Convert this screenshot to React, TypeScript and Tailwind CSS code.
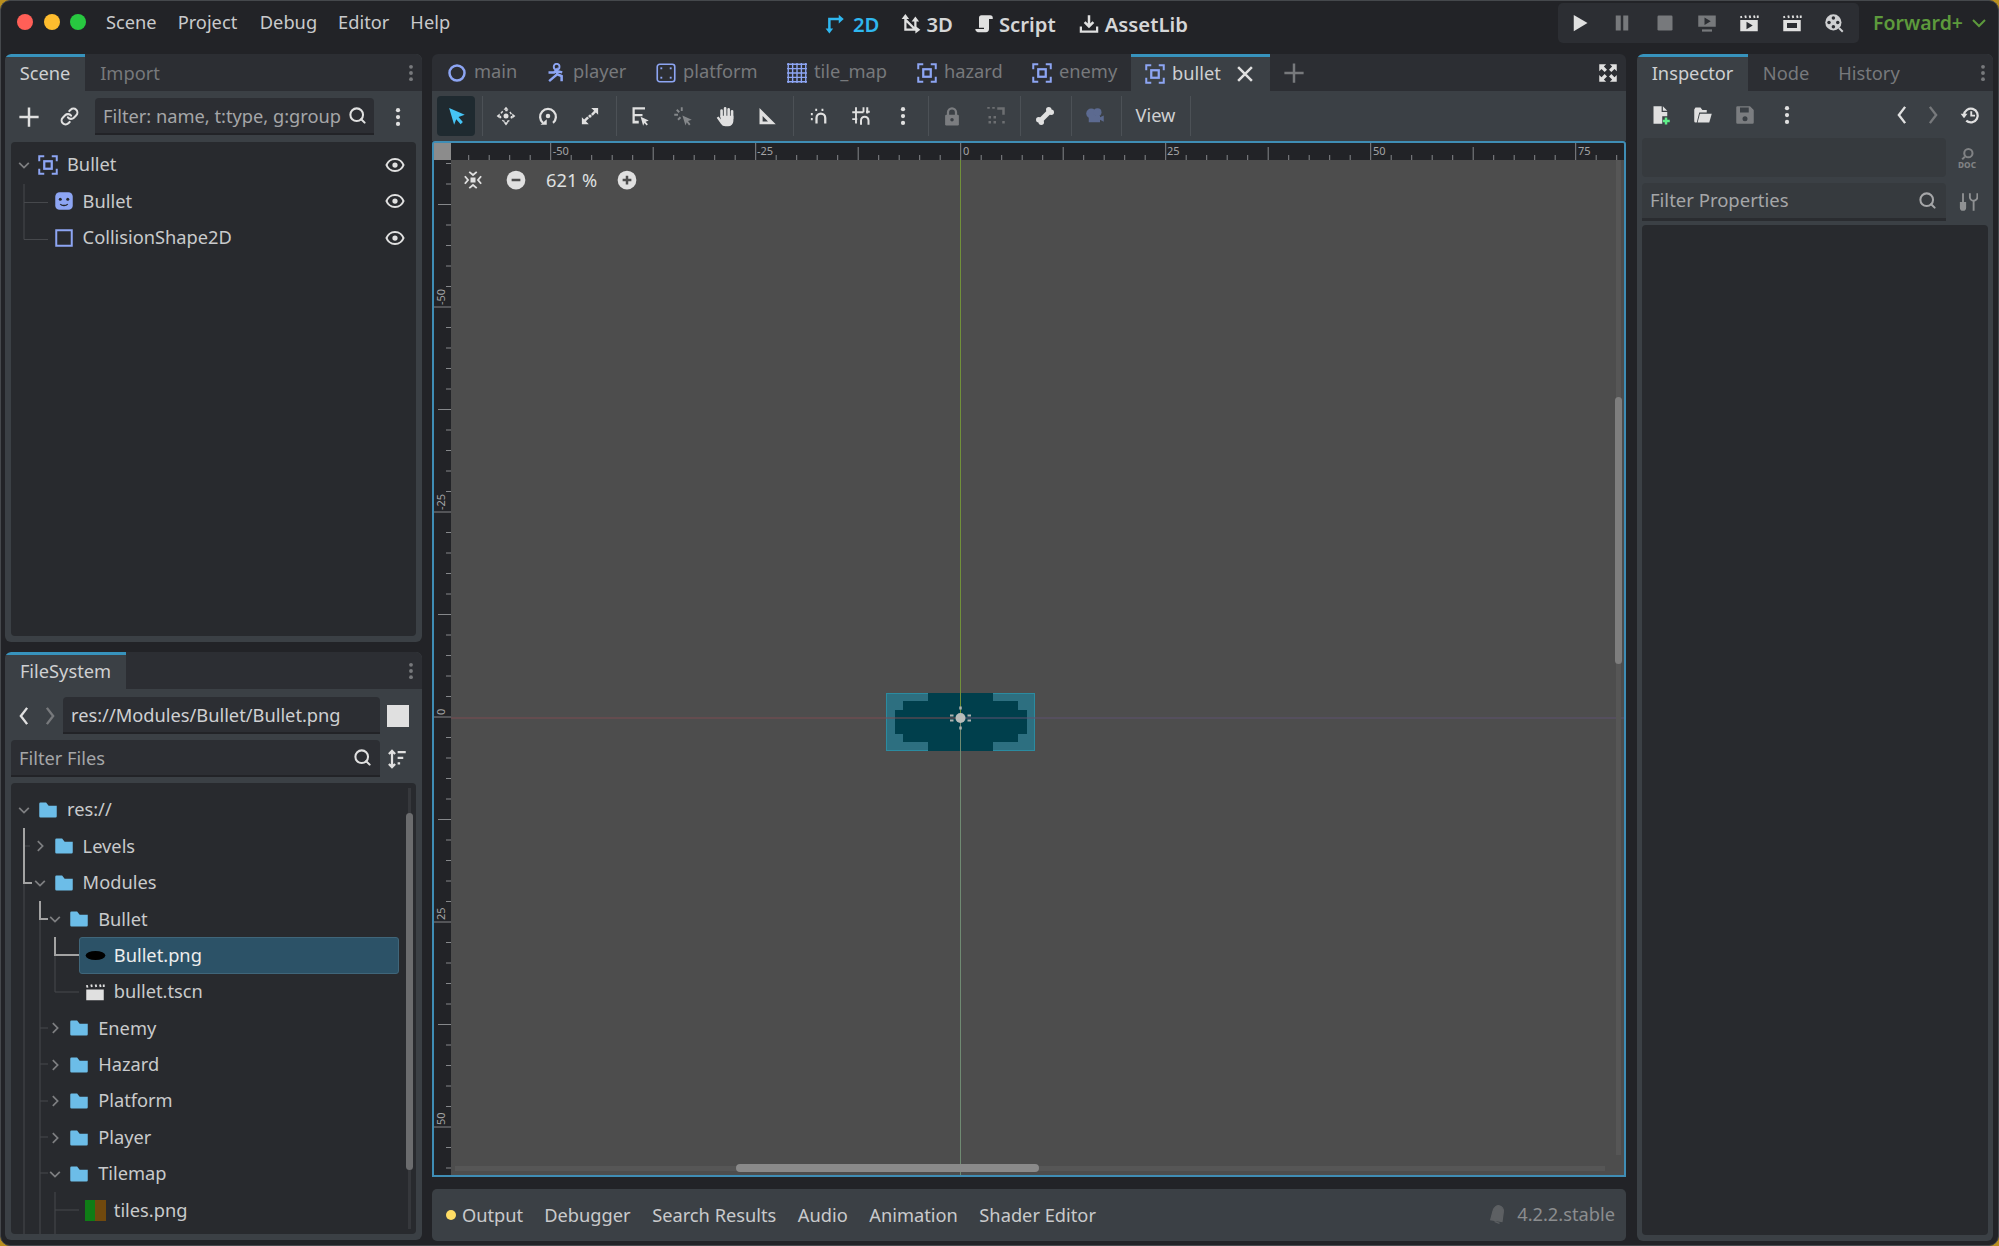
import React from 'react';
import { Link, Search } from 'lucide-react';

const BLUE = '#8da5f3';

const Ic: React.FC<{ s?: number; c?: string; o?: number; children: React.ReactNode }> = ({ s = 20, c = '#e0e0e0', o = 1, children }) => (
  <svg width={s} height={s} viewBox="0 0 16 16" fill="none" color={c} opacity={o} className="shrink-0">
    {children}
  </svg>
);

const Node2D = () => (
  <Ic c={BLUE}>
    <path d="M1 5V1h4M11 1h4v4M15 11v4h-4M5 15H1v-4" stroke="currentColor" strokeWidth="1.6" />
    <rect x="5" y="5" width="6" height="6" stroke="currentColor" strokeWidth="1.8" />
  </Ic>
);
const SpriteIcon = () => (
  <Ic c={BLUE}>
    <rect x="1" y="1" width="14" height="14" rx="3.5" fill="currentColor" />
    <circle cx="5" cy="6.5" r="1.2" fill="#26282c" />
    <circle cx="11" cy="6.5" r="1.2" fill="#26282c" />
    <path d="M5 10.5c1.5 1.5 4.5 1.5 6 0" stroke="#26282c" strokeWidth="1.1" />
  </Ic>
);
const ShapeIcon = () => (
  <Ic c={BLUE}>
    <rect x="1.8" y="1.8" width="12.4" height="12.4" stroke="currentColor" strokeWidth="1.6" />
  </Ic>
);
const CircleIcon = () => (
  <Ic c={BLUE}>
    <circle cx="8" cy="8" r="6" stroke="currentColor" strokeWidth="2" />
  </Ic>
);
const PlayerIcon = () => (
  <Ic c={BLUE}>
    <circle cx="8.5" cy="3" r="2.3" stroke="currentColor" strokeWidth="1.5" />
    <path d="M2 7.5h4.500l2-2 .5 3.500-3 2.500-3.500 3M9 9l3.500 1.500V14.500M9 6.500l4 1" stroke="currentColor" strokeWidth="2" />
  </Ic>
);
const PlatformIcon = () => (
  <Ic c={BLUE}>
    <rect x="1" y="1" width="14" height="14" rx="2" stroke="currentColor" strokeWidth="1.3" />
    <rect x="3.5" y="3.5" width="1.5" height="1.5" fill="currentColor" />
    <rect x="11" y="3.5" width="1.5" height="1.5" fill="currentColor" />
    <rect x="3.5" y="11" width="1.5" height="1.5" fill="currentColor" />
    <rect x="11" y="11" width="1.5" height="1.5" fill="currentColor" />
  </Ic>
);
const TileIcon = () => (
  <Ic c={BLUE}>
    <path d="M1 0v16M4.500 0v16M8 0v16M11.500 0v16M15 0v16M0 1h16M0 4.500h16M0 8h16M0 11.500h16M0 15h16" stroke="currentColor" strokeWidth="1.1" />
  </Ic>
);
const Dots: React.FC<{ c?: string; s?: number }> = ({ c = '#e0e0e0', s = 20 }) => (
  <Ic c={c} s={s}>
    <circle cx="8" cy="2.5" r="1.7" fill="currentColor" />
    <circle cx="8" cy="8" r="1.7" fill="currentColor" />
    <circle cx="8" cy="13.5" r="1.7" fill="currentColor" />
  </Ic>
);
const Eye = () => (
  <Ic>
    <path d="M8 3.200C4.500 3.200 2 5.800 1.200 8 2 10.200 4.500 12.800 8 12.800s6-2.600 6.800-4.800C14 5.800 11.500 3.200 8 3.200z" stroke="currentColor" strokeWidth="1.7" />
    <circle cx="8" cy="8" r="2.1" fill="currentColor" />
  </Ic>
);
const Arrow: React.FC<{ open?: boolean }> = ({ open }) => (
  <Ic s={14} c="#7d7e80">
    <path d={open ? 'M2.500 5.500 8 11l5.500-5.500' : 'M5.500 2.500 11 8l-5.500 5.500'} stroke="currentColor" strokeWidth="2" />
  </Ic>
);
const Folder = () => (
  <Ic c="#6cbde8">
    <path d="M1 3a1 1 0 0 1 1-1h4.500l2 2.500H15V13a1 1 0 0 1-1 1H2a1 1 0 0 1-1-1z" fill="currentColor" />
  </Ic>
);
const Clapper = () => (
  <Ic>
    <path d="M1 6h14v8.500H1z" fill="currentColor" />
    <path d="M1.500 2.500 2 4.500M5 2l.5 2M8.500 2l.5 2M12 2l.5 2M15 2v2" stroke="currentColor" strokeWidth="1.5" />
  </Ic>
);
const Chev: React.FC<{ right?: boolean; c?: string }> = ({ right, c = '#e0e0e0' }) => (
  <Ic c={c}>
    <path d={right ? 'M5.500 1.500 10.500 8l-5 6.500' : 'M10.500 1.500 5.500 8l5 6.500'} stroke="currentColor" strokeWidth="1.9" />
  </Ic>
);
const Close = () => (
  <Ic>
    <path d="M2.500 2.500l11 11M13.500 2.500l-11 11" stroke="currentColor" strokeWidth="2" />
  </Ic>
);
const PlusIcon: React.FC<{ c?: string; s?: number }> = ({ c = '#e0e0e0', s = 22 }) => (
  <Ic c={c} s={s}>
    <path d="M8 1v14M1 8h14" stroke="currentColor" strokeWidth="1.8" />
  </Ic>
);
const Sep = () => <div className="w-px h-[40px] bg-[#4c5156] shrink-0" />;

const TabBtn: React.FC<{ label: string; active?: boolean; w: string }> = ({ label, active, w }) => (
  <div className={`flex items-center h-[37px] pb-[2px] shrink-0 ${w} ${active ? 'bg-[#3b4045] border-t-[3px] border-[#3793bd] text-[#cfd0d2]' : 'border-t-[3px] border-transparent text-[#77797c]'}`}>
    <span>{label}</span>
  </div>
);

const DockTabs: React.FC<{ children: React.ReactNode }> = ({ children }) => (
  <div className="flex items-center h-[37px] bg-[#2c2e33] rounded-t-[6px] shrink-0 relative overflow-hidden">{children}</div>
);

const Field: React.FC<{ className?: string; text?: string; dim?: boolean; children?: React.ReactNode }> = ({ className, text, dim, children }) => (
  <div className={`flex items-center justify-between h-[37px] bg-[#2c2e33] border-b-[2px] border-[#222327] rounded-t-[4px] px-[8px] ${className ?? ''} ${dim ? 'text-[#a5a6a8]' : 'text-[#cfd0d2]'}`}>
    <span className="whitespace-nowrap leading-[24px]">{text}</span>
    {children}
  </div>
);

type Row = { d: number; name: string; kind: 'folder' | 'png' | 'scene' | 'tiles'; open?: boolean; leaf?: boolean; sel?: boolean };
const files: Row[] = [
  { d: 0, name: 'res://', kind: 'folder', open: true },
  { d: 1, name: 'Levels', kind: 'folder' },
  { d: 1, name: 'Modules', kind: 'folder', open: true },
  { d: 2, name: 'Bullet', kind: 'folder', open: true },
  { d: 3, name: 'Bullet.png', kind: 'png', leaf: true, sel: true },
  { d: 3, name: 'bullet.tscn', kind: 'scene', leaf: true },
  { d: 2, name: 'Enemy', kind: 'folder' },
  { d: 2, name: 'Hazard', kind: 'folder' },
  { d: 2, name: 'Platform', kind: 'folder' },
  { d: 2, name: 'Player', kind: 'folder' },
  { d: 2, name: 'Tilemap', kind: 'folder', open: true },
  { d: 3, name: 'tiles.png', kind: 'tiles', leaf: true },
];

const FileIcon: React.FC<{ kind: Row['kind'] }> = ({ kind }) => {
  if (kind === 'folder') return <Folder />;
  if (kind === 'scene') return <Clapper />;
  if (kind === 'png')
    return (
      <Ic s={21}>
        <ellipse cx="8" cy="8" rx="7.5" ry="3.4" fill="#000" />
      </Ic>
    );
  return (
    <div className="flex w-[21px] h-[21px] shrink-0">
      <div className="w-1/2 bg-[#0f7d16]" />
      <div className="w-1/2 bg-[#70490e]" />
    </div>
  );
};

const FileRow: React.FC<{ r: Row }> = ({ r }) => (
  <div className="relative flex items-center h-[36.4px] text-[#c9cacc]" style={{ paddingLeft: 5 + r.d * 15.6 }}>
    {r.sel && <div className="absolute left-[68px] right-[17px] inset-y-0 bg-[#2c5267] border border-[#40667a] rounded-[3px]" />}
    <div className="relative flex items-center w-[16px] justify-center shrink-0">{!r.leaf && <Arrow open={r.open} />}</div>
    <div className={`relative flex items-center ml-[6px] ${r.kind === 'png' || r.kind === 'tiles' ? 'gap-[8px]' : 'gap-[9px]'}`}>
      <FileIcon kind={r.kind} />
      <span className={`pb-[1px] ${r.sel ? 'text-[#eceded]' : ''}`}>{r.name}</span>
    </div>
  </div>
);

const SceneRow: React.FC<{ d: number; icon: React.ReactNode; name: string; arrow?: boolean }> = ({ d, icon, name, arrow }) => (
  <div className="flex items-center h-[36.4px] text-[#c9cacc] pr-[11px]" style={{ paddingLeft: 5 + d * 15.6 }}>
    <div className="flex items-center w-[16px] justify-center shrink-0">{arrow && <Arrow open />}</div>
    <div className="flex items-center ml-[6px] gap-[9px]">
      {icon}
      <span className="pb-[1px]">{name}</span>
    </div>
    <div className="ml-auto">
      <Eye />
    </div>
  </div>
);

const ScenePanel = () => (
  <div className="flex flex-col h-[588px] bg-[#3b4045] rounded-[6px] overflow-hidden">
    <DockTabs>
      <TabBtn label="Scene" active w="w-[80px] justify-center" />
      <TabBtn label="Import" w="w-[90px] justify-center" />
      <div className="ml-auto mr-[2px]">
        <Dots c="#77797c" s={18} />
      </div>
    </DockTabs>
    <div className="flex items-center h-[51px] shrink-0 pl-[13px] pr-[14px]">
      <PlusIcon />
      <div className="ml-[20px]">
        <Link size={19} strokeWidth={2.6} color="#e0e0e0" />
      </div>
      <Field className="ml-[16px] w-[279px] pr-[7px]" text="Filter: name, t:type, g:group" dim>
        <Search size={19} strokeWidth={2.6} color="#e0e0e0" className="shrink-0" />
      </Field>
      <div className="ml-auto">
        <Dots />
      </div>
    </div>
    <div className="flex-1 mx-[6px] mb-[6px] bg-[#282a2e] rounded-[4px] pt-[4.8px] relative">
      <SceneRow d={0} arrow icon={<Node2D />} name="Bullet" />
      <SceneRow d={1} icon={<SpriteIcon />} name="Bullet" />
      <SceneRow d={1} icon={<ShapeIcon />} name="CollisionShape2D" />
      <svg className="absolute left-0 top-0" width="60" height="110" fill="none">
        <path d="M13 42v55.500M13 60.500h24M13 97.500h24" stroke="#46484c" />
      </svg>
    </div>
  </div>
);

const FilePanel = () => (
  <div className="flex flex-col h-[588px] mt-[10px] bg-[#3b4045] rounded-[6px] overflow-hidden">
    <DockTabs>
      <TabBtn label="FileSystem" active w="w-[121px] justify-center" />
      <div className="ml-auto mr-[2px]">
        <Dots c="#77797c" s={18} />
      </div>
    </DockTabs>
    <div className="flex items-center h-[45px] shrink-0 pt-[8px] pl-[9px]">
      <Chev />
      <div className="ml-[6px]">
        <Chev right c="#77797c" />
      </div>
      <Field className="ml-[3px] w-[317px]" text="res://Modules/Bullet/Bullet.png" />
      <div className="w-[22px] h-[22px] bg-[#e0e0e0] ml-[7px]" />
    </div>
    <div className="flex items-center h-[43px] shrink-0 pt-[6px] pl-[6px]">
      <Field className="w-[369px]" text="Filter Files" dim>
        <Search size={19} strokeWidth={2.6} color="#e0e0e0" className="shrink-0" />
      </Field>
      <div className="ml-[7px]">
        <Ic>
          <path d="M4 1.500v13M1.500 4 4 1.500 6.500 4M1.500 12 4 14.500 6.500 12" stroke="currentColor" strokeWidth="1.8" />
          <path d="M8.500 2.500H15M8.500 7H13M8.500 11.500h2" stroke="currentColor" strokeWidth="1.8" />
        </Ic>
      </div>
    </div>
    <div className="flex-1 relative mx-[6px] mt-[6px] mb-[6px] bg-[#282a2e] rounded-[4px] pt-[8.8px] overflow-hidden">
      {files.map((r) => (
        <FileRow key={r.name + r.d} r={r} />
      ))}
      <svg className="absolute left-0 top-0" width="80" height="452" fill="none">
        <path d="M13 100v352M29 136v316M44 409v43M29 245h8M29 281h8M29 318h8M29 354h8M29 390h8M44 172v37h24M44 427h24M13 63h6" stroke="#46484c" />
        <path d="M13 45v55h8M29 118v18h8M44 154v18h24" stroke="#a3a3a3" strokeWidth="2" />
      </svg>
      <div className="absolute right-[5px] top-[5px] bottom-[5px] w-[3px] bg-[#36383c]" />
      <div className="absolute right-[3px] top-[30px] h-[357px] w-[7px] rounded-full bg-[#6b6c6e]" />
    </div>
  </div>
);

// canvas starts at page x 451 / y 160; origin of the 2D view sits at 961, 717
const TopRuler = () => {
  const ticks = Array.from({ length: 58 }, (_, i) => 550.7 + (i - 4) * 20.5 - 451);
  return (
    <svg width="1173" height="17" fill="none" className="block">
      {ticks.map((x, i) => {
        const k = i - 4;
        const h = ((k % 10) + 10) % 10 === 0 ? 17 : ((k % 5) + 5) % 5 === 0 ? 13 : 5;
        return <line key={i} x1={x} x2={x} y1={17 - h} y2={17} stroke="#85878a" />;
      })}
      {[
        ['-50', 99.7],
        ['-25', 304],
        ['0', 510],
        ['25', 714],
        ['50', 920],
        ['75', 1125],
      ].map(([t, x]) => (
        <text key={t} x={Number(x) + 2} y="12" fontSize="11" fill="#a3a4a6" fontFamily="'Noto Sans', sans-serif">
          {t}
        </text>
      ))}
    </svg>
  );
};

const LeftRuler = () => {
  const ticks = Array.from({ length: 50 }, (_, i) => (i - 7) * 20.5 + 307 - 160);
  return (
    <svg width="17" height="1015" fill="none" className="block shrink-0">
      {ticks.map((y, i) => {
        const k = i - 7;
        const h = ((k % 10) + 10) % 10 === 0 ? 17 : ((k % 5) + 5) % 5 === 0 ? 13 : 5;
        return <line key={i} x1={17 - h} x2={17} y1={y} y2={y} stroke="#85878a" />;
      })}
      {[
        ['-50', 147],
        ['-25', 352],
        ['0', 557],
        ['25', 762],
        ['50', 967],
      ].map(([t, y], i) => (
        <text key={i} x="0" y="0" transform={`translate(11 ${Number(y) - 2}) rotate(-90)`} fontSize="11" fill="#a3a4a6" fontFamily="'Noto Sans', sans-serif">
          {t}
        </text>
      ))}
    </svg>
  );
};

const Canvas = () => (
  <div className="relative flex-1 bg-[#4d4d4d] overflow-hidden">
    <svg className="absolute inset-0" width="1173" height="1015" fill="none">
      <g transform="translate(1 0)">
        <rect x="434.5" y="533.5" width="148" height="57" fill="#2d6f80" stroke="#2b8ba0" />
        <polygon points="476,533 541,533 541,541 566,541 566,550 575,550 575,574 566,574 566,582 541,582 541,591 476,591 476,582 451,582 451,574 443,574 443,550 451,550 451,541 476,541" fill="#003f4c" />
        <line x1="508.5" x2="508.5" y1="0" y2="557" stroke="#71903a" />
        <line x1="508.5" x2="508.5" y1="557" y2="1015" stroke="#6f8a72" />
        <line x1="-1" x2="509" y1="558" y2="558" stroke="#7c4d52" />
        <line x1="509" x2="1172" y1="558" y2="558" stroke="#5e5270" />
        <circle cx="508.5" cy="558" r="5" fill="#b9bcba" />
        <path d="M508.5 549.500v-3M508.5 566.500v3" stroke="#aeb1af" strokeWidth="2.500" />
        <path d="M498 555.500h3.500M498 560.500h3.500M515.500 555.500h3.500M515.500 560.500h3.500" stroke="#aeb1af" strokeWidth="2" />
      </g>
    </svg>
    <div className="absolute left-[12px] top-[8px] flex items-center h-[24px] text-[#dfe0e0]">
      <Ic s={20}>
        <rect x="6" y="6" width="4" height="4" fill="currentColor" />
        <path d="M5 1.500 8 4l3-2.500M5 14.500 8 12l3 2.500M1.500 5 4 8l-2.500 3M14.500 5 12 8l2.500 3" stroke="currentColor" strokeWidth="1.5" />
      </Ic>
      <div className="ml-[23px]">
        <Ic>
          <circle cx="8" cy="8" r="7.5" fill="currentColor" />
          <path d="M4.500 8h7" stroke="#4d4d4d" strokeWidth="2" />
        </Ic>
      </div>
      <span className="ml-[20px] mr-[20px]">621 %</span>
      <Ic>
        <circle cx="8" cy="8" r="7.5" fill="currentColor" />
        <path d="M4.500 8h7M8 4.500v7" stroke="#4d4d4d" strokeWidth="2" />
      </Ic>
    </div>
    <div className="absolute left-[1165px] top-0 h-[995px] w-[5px] bg-[#565656]" />
    <div className="absolute left-[1164px] top-[237px] h-[267px] w-[7px] rounded-full bg-[#7e7e7e]" />
    <div className="absolute left-[4px] top-[1006px] w-[1150px] h-[5px] bg-[#565656]" />
    <div className="absolute left-[285px] top-[1004px] w-[303px] h-[8px] rounded-full bg-[#8a8a8a]" />
  </div>
);

const CenterTab: React.FC<{ icon: React.ReactNode; label: string; w: string }> = ({ icon, label, w }) => (
  <div className={`flex items-center shrink-0 gap-[7px] ${w} text-[#77797c]`}>
    {icon}
    <span className="pb-[2px]">{label}</span>
  </div>
);

const ToolBtn: React.FC<{ w: string; children: React.ReactNode }> = ({ w, children }) => (
  <div className={`flex items-center justify-center shrink-0 ${w}`}>{children}</div>
);

const Center = () => (
  <div className="flex flex-col w-[1194px] ml-[10px]">
    <div className="flex items-center h-[37px] bg-[#2c2e33] rounded-t-[6px] shrink-0 pl-[15px]">
      <CenterTab w="w-[99px]" icon={<CircleIcon />} label="main" />
      <CenterTab w="w-[110px]" icon={<PlayerIcon />} label="player" />
      <CenterTab w="w-[131px]" icon={<PlatformIcon />} label="platform" />
      <CenterTab w="w-[130px]" icon={<TileIcon />} label="tile_map" />
      <CenterTab w="w-[115px]" icon={<Node2D />} label="hazard" />
      <CenterTab w="w-[99px]" icon={<Node2D />} label="enemy" />
      <div className="flex items-center w-[139px] h-[37px] shrink-0 bg-[#3b4045] border-t-[3px] border-[#3793bd] pl-[14px] text-[#cfd0d2]">
        <Node2D />
        <span className="ml-[7px] pb-[2px]">bullet</span>
        <div className="ml-[14px]">
          <Close />
        </div>
      </div>
      <div className="ml-[13px]">
        <PlusIcon c="#77797c" />
      </div>
      <div className="ml-auto mr-[8px]">
        <Ic>
          <path d="M1 1h5.500L4.700 2.800l2.500 2.500-1.900 1.900-2.500-2.500L1 6.500zM15 1v5.500l-1.800-1.800-2.500 2.500-1.900-1.900 2.500-2.500L9.500 1zM1 15V9.500l1.800 1.800 2.500-2.500 1.900 1.900-2.500 2.500L6.500 15zM15 15H9.500l1.800-1.800-2.500-2.500 1.900-1.900 2.500 2.500L15 9.500z" fill="currentColor" />
        </Ic>
      </div>
    </div>
    <div className="flex items-center h-[50px] bg-[#3b4045] shrink-0 pl-[5px]">
      <div className="flex items-center justify-center w-[38px] h-[40px] bg-[#1f2a30] rounded-[4px] shrink-0">
        <Ic c="#45c4f5">
          <path d="M2.500 1.500 15 7l-5 1.700 3.500 4-1.800 1.800-3.500-4L6.500 15z" fill="currentColor" />
        </Ic>
      </div>
      <div className="ml-[7px]">
        <Sep />
      </div>
      <ToolBtn w="w-[46px]">
        <Ic>
          <circle cx="8" cy="8" r="2" fill="currentColor" />
          <path d="M8 .5 10 3H6zM8 15.500 10 13H6zM.5 8 3 6v4zM15.500 8 13 6v4z" fill="currentColor" />
          <circle cx="8" cy="8" r="4.500" stroke="currentColor" strokeWidth="1.2" strokeDasharray="2 2" />
        </Ic>
      </ToolBtn>
      <ToolBtn w="w-[38px]">
        <Ic>
          <path d="M4 13.500a6.300 6.300 0 1 1 8 0" stroke="currentColor" strokeWidth="1.8" />
          <path d="M2 15h5v-4.500z" fill="currentColor" />
          <circle cx="8" cy="8" r="1.8" fill="currentColor" />
        </Ic>
      </ToolBtn>
      <ToolBtn w="w-[46px]">
        <Ic>
          <path d="M9 1.500h5.500V7l-1.800-1.800-2.500 2.500-1.400-1.400 2.500-2.500zM7 14.500H1.500V9l1.800 1.800 2.500-2.500 1.400 1.400-2.500 2.500z" fill="currentColor" />
          <circle cx="8" cy="8" r="1.3" fill="currentColor" />
        </Ic>
      </ToolBtn>
      <div className="ml-[3px]">
        <Sep />
      </div>
      <ToolBtn w="w-[46px]">
        <Ic>
          <path d="M2 1h10v1.800H3.800v3.600H10v1.800H3.800v3.600H7V14H2z" fill="currentColor" />
          <path d="M8.500 8.500 15 11.500l-2.500 1 1.800 2-1 1-1.800-2-1 2.300z" fill="currentColor" />
        </Ic>
      </ToolBtn>
      <ToolBtn w="w-[40px]">
        <Ic o={0.45}>
          <path d="M7 1v3M1 7h3M3 3l2 2M4 11l2-2" stroke="currentColor" strokeWidth="1.5" />
          <path d="M7.500 7.500 15 11l-3 1 2 2.500-1.200 1L11 13l-1 2.500z" fill="currentColor" />
        </Ic>
      </ToolBtn>
      <ToolBtn w="w-[44px]">
        <Ic s={21}>
          <path d="M5 8V3.500M7.700 8V1.800M10.400 8V2.500M13 9.500V4" stroke="currentColor" strokeWidth="2" strokeLinecap="round" />
          <path d="M4 7.500h10v4a4 4 0 0 1-4 4H8a4 4 0 0 1-3.500-2L1.300 9l1.400-1 1.800 2.300z" fill="currentColor" />
        </Ic>
      </ToolBtn>
      <ToolBtn w="w-[40px]">
        <Ic>
          <path fillRule="evenodd" d="M2 1.500v13h13zM4.500 8l4.300 4.300H4.500z" fill="currentColor" />
        </Ic>
      </ToolBtn>
      <div className="ml-[6px]">
        <Sep />
      </div>
      <ToolBtn w="w-[50px]">
        <Ic>
          <path d="M6 14V9.500a3.500 3.500 0 0 1 7 0V14" stroke="currentColor" strokeWidth="1.8" />
          <path d="M1.500 6.500h1.500M1.500 10.500h1.500M5 3h1.500M10 3h1.500" stroke="currentColor" strokeWidth="1.8" />
        </Ic>
      </ToolBtn>
      <ToolBtn w="w-[34px]">
        <Ic>
          <path d="M1 5h9M1 10.500h4M4 1v13M10 1v4" stroke="currentColor" strokeWidth="1.5" />
          <path d="M8 15v-3.500a3 3 0 0 1 6 0V15M13 1v5M12 4.500h3" stroke="currentColor" strokeWidth="1.6" />
        </Ic>
      </ToolBtn>
      <ToolBtn w="w-[50px]">
        <Dots />
      </ToolBtn>
      <Sep />
      <ToolBtn w="w-[46px]">
        <Ic c="#7b7d80">
          <rect x="2.500" y="7" width="11" height="8.500" rx="1" fill="currentColor" />
          <path d="M4.800 7.500V5a3.200 3.200 0 0 1 6.400 0v2.500" stroke="currentColor" strokeWidth="1.8" />
          <circle cx="8" cy="11" r="1.400" fill="#3b4045" />
        </Ic>
      </ToolBtn>
      <ToolBtn w="w-[42px]">
        <Ic c="#6d6f72">
          <path d="M9 1h6v6h-2V3H9zM2 8h2v2H2zM6 8h2v2H6zM2 12h2v2H2zM6 12h2v2H6zM13 12h2v2h-2z" fill="currentColor" />
          <path d="M1 1.500h2M5 1.500h2" stroke="currentColor" strokeWidth="1.5" />
        </Ic>
      </ToolBtn>
      <div className="ml-[3px]">
        <Sep />
      </div>
      <ToolBtn w="w-[48px]">
        <Ic>
          <path d="M4 12l8-8" stroke="currentColor" strokeWidth="4" />
          <circle cx="11" cy="3" r="2.2" fill="currentColor" />
          <circle cx="13" cy="5" r="2.2" fill="currentColor" />
          <circle cx="3" cy="11" r="2.2" fill="currentColor" />
          <circle cx="5" cy="13" r="2.2" fill="currentColor" />
        </Ic>
      </ToolBtn>
      <div className="ml-[2px]">
        <Sep />
      </div>
      <ToolBtn w="w-[46px]">
        <Ic c="#5c6a90">
          <circle cx="5" cy="6" r="4" fill="currentColor" />
          <circle cx="10" cy="5" r="3.2" fill="currentColor" />
          <path d="M3 8h9v5H3zM12 9l3-1.500v5L12 11z" fill="currentColor" />
        </Ic>
      </ToolBtn>
      <div className="ml-[3px]">
        <Sep />
      </div>
      <div className="w-[67px] pb-[1px] text-center text-[#cfd0d2]">View</div>
      <div className="ml-[1px]">
        <Sep />
      </div>
    </div>
    <div className="flex flex-col h-[1036px] border-[2px] border-[#3f8db5] rounded-t-[3px] bg-[#222327] shrink-0">
      <div className="flex h-[17px] shrink-0">
        <div className="w-[17px] h-[17px] bg-[#8c8c8c] shrink-0" />
        <TopRuler />
      </div>
      <div className="flex flex-1 min-h-0">
        <LeftRuler />
        <Canvas />
      </div>
    </div>
    <div className="flex items-center h-[52px] mt-[12px] bg-[#3b4045] rounded-[5px] shrink-0 pl-[14px] pr-[11px] text-[#c9cacc]">
      <div className="w-[10px] h-[10px] rounded-full bg-[#ffdd65] mr-[6px]" />
      <span>Output</span>
      <span className="ml-[21px]">Debugger</span>
      <span className="ml-[21.5px]">Search Results</span>
      <span className="ml-[21.5px]">Audio</span>
      <span className="ml-[21.5px]">Animation</span>
      <span className="ml-[21.5px]">Shader Editor</span>
      <div className="ml-auto flex items-center gap-[10px] pb-[2px] text-[#8b8d8f]">
        <Ic c="#5d6063">
          <path d="M3 12.500 5 5c.6-2.500 3-4 5-3.500s3.500 2.500 3 5l-1 7.500zM6 14l4 1.500" stroke="currentColor" strokeWidth="1" fill="currentColor" />
        </Ic>
        <span>4.2.2.stable</span>
      </div>
    </div>
  </div>
);

const Inspector = () => (
  <div className="flex flex-col w-[356px] ml-[11px] h-[1187px] bg-[#3b4045] rounded-[6px] overflow-hidden">
    <DockTabs>
      <TabBtn label="Inspector" active w="w-[111px] justify-center" />
      <TabBtn label="Node" w="w-[76px] justify-center" />
      <TabBtn label="History" w="w-[90px] justify-center" />
      <div className="ml-auto mr-[1px]">
        <Dots c="#77797c" s={18} />
      </div>
    </DockTabs>
    <div className="flex items-center h-[47px] shrink-0 pl-[14px] pr-[13px]">
      <ToolBtn w="w-[20px]">
        <Ic>
          <path d="M2 1h6.500v4.500H13V9H9v6H2z" fill="currentColor" />
          <path d="M9.500 1l3.500 3.500H9.500z" fill="currentColor" />
          <path d="M12 10v5.500M9.500 12.800h5.500" stroke="#5ff08a" strokeWidth="2" />
        </Ic>
      </ToolBtn>
      <ToolBtn w="w-[64px]">
        <Ic>
          <path d="M1 3.500 2 2h4l1.500 2H11v2H5L3 14H2a1 1 0 0 1-1-1z" fill="currentColor" />
          <path d="M5.500 7H15l-2 7H3.700z" fill="currentColor" />
        </Ic>
      </ToolBtn>
      <ToolBtn w="w-[20px]">
        <Ic c="#7b7d80">
          <path fillRule="evenodd" d="M1 2a1 1 0 0 1 1-1h10l3 3v10a1 1 0 0 1-1 1H2a1 1 0 0 1-1-1zM4 2v4h7V2zM8 9a2 2 0 1 0 0 4 2 2 0 0 0 0-4z" fill="currentColor" />
        </Ic>
      </ToolBtn>
      <ToolBtn w="w-[64px]">
        <Dots />
      </ToolBtn>
      <div className="ml-auto">
        <Chev />
      </div>
      <div className="ml-[11px]">
        <Chev right c="#77797c" />
      </div>
      <div className="ml-[17px]">
        <Ic>
          <path d="M3.200 8a5.500 5.500 0 1 1 1.800 4.500" stroke="currentColor" strokeWidth="1.8" />
          <path d="M.5 7h5.500L3.200 10.500z" fill="currentColor" />
          <path d="M9 5v3.500h3" stroke="currentColor" strokeWidth="1.5" />
        </Ic>
      </div>
    </div>
    <div className="flex items-center h-[39px] shrink-0 pl-[5px]">
      <div className="w-[304px] h-[39px] bg-[#363a3e] rounded-[4px]" />
      <div className="ml-[10px]">
        <Ic c="#808284" s={22}>
          <circle cx="9" cy="4.500" r="3" stroke="currentColor" strokeWidth="1.5" />
          <path d="M6.500 7 4.500 9" stroke="currentColor" strokeWidth="1.5" />
          <text x="8" y="15.500" textAnchor="middle" fontSize="6" fontWeight="800" fill="currentColor" fontFamily="'Noto Sans', sans-serif">DOC</text>
        </Ic>
      </div>
    </div>
    <div className="flex items-center h-[38px] mt-[6px] shrink-0 pl-[5px]">
      <div className="flex items-center justify-between w-[304px] h-[38px] bg-[#363a3e] border-b-[3px] border-[#2a2c30] rounded-t-[4px] pl-[8px] pr-[9px] text-[#a5a6a8]">
        <span className="text-[18.5px]">Filter Properties</span>
        <Search size={19} strokeWidth={2.6} color="#a5a6a8" className="shrink-0" />
      </div>
      <div className="ml-[12px]">
        <Ic c="#8f9193">
          <path d="M4 1v7M12.500 7v8" stroke="currentColor" strokeWidth="1.5" />
          <path d="M9.500 1v3a3 3 0 0 0 6 0V1" stroke="currentColor" strokeWidth="1.5" />
          <path d="M1.500 8h5v4.500a2.500 2.500 0 0 1-5 0z" fill="currentColor" />
        </Ic>
      </div>
    </div>
    <div className="flex-1 mx-[5px] mt-[4px] mb-[6px] bg-[#282a2e] rounded-[4px]" />
  </div>
);

const Btn: React.FC<{ children: React.ReactNode }> = ({ children }) => <div className="flex items-center justify-center w-[42.3px] shrink-0">{children}</div>;

export default function App() {
  return (
    <div className="w-[1999px] h-[1246px] bg-[#b98f1f] font-['Noto_Sans',sans-serif] text-[18.25px] leading-none overflow-hidden">
      <div className="flex flex-col h-full bg-[#222327] rounded-[10px] border border-[#45484c]">
        <div className="flex items-start h-[53px] shrink-0 pt-[2px] text-[#c9cacc]">
          <div className="flex items-center w-[824px] h-[38px] shrink-0 pl-[16px]">
            <div className="w-[16px] h-[16px] rounded-full bg-[#ff5f57]" />
            <div className="w-[16px] h-[16px] rounded-full bg-[#febc2e] ml-[10.5px]" />
            <div className="w-[16px] h-[16px] rounded-full bg-[#28c840] ml-[10.5px]" />
            <span className="ml-[20px]">Scene</span>
            <span className="ml-[21px]">Project</span>
            <span className="ml-[22.5px]">Debug</span>
            <span className="ml-[21px]">Editor</span>
            <span className="ml-[21px]">Help</span>
          </div>
          <div className="flex items-center h-[42px] font-semibold text-[20.3px] text-[#d5d6d7]">
            <div className="flex items-center text-[#2fb7ef]">
              <Ic c="#2fb7ef">
                <path d="M3.500 12V4h8" stroke="currentColor" strokeWidth="2" />
                <path d="M.5 11.500h6L3.500 15.500zM11 .5l4 3.500-4 3.500z" fill="currentColor" />
              </Ic>
              <span className="ml-[8px]">2D</span>
            </div>
            <div className="flex items-center ml-[22px]">
              <Ic>
                <path d="M3.500 3v9.500H12M3.500 4.500 12 13M11.500 4v8" stroke="currentColor" strokeWidth="1.8" />
                <path d="M3.500 0 6.500 4h-6zM15.500 12.500 11.500 15.500v-6zM11.500 2l3 4h-6z" fill="currentColor" />
              </Ic>
              <span className="ml-[5px]">3D</span>
            </div>
            <div className="flex items-center ml-[21px]">
              <Ic>
                <path d="M6 1h7a2 2 0 0 1 2 2v1h-3v8a2.500 2.500 0 0 1-2.500 2.500H3A2.500 2.500 0 0 1 1 12h7v-1H4V3a2 2 0 0 1 2-2z" fill="currentColor" />
              </Ic>
              <span className="ml-[5px]">Script</span>
            </div>
            <div className="flex items-center ml-[23px]">
              <Ic>
                <path d="M8 1v8.500M4.500 6.500 8 10l3.500-3.500" stroke="currentColor" strokeWidth="2" />
                <path d="M1.500 10v4h13v-4" stroke="currentColor" strokeWidth="1.8" />
              </Ic>
              <span className="ml-[6px]">AssetLib</span>
            </div>
          </div>
          <div className="flex items-center ml-auto w-[301px] h-[40px] bg-[#2c2e33] rounded-[5px] shrink-0 pl-[1px]">
            <Btn>
              <Ic>
                <path d="M3 1.500v13L14 8z" fill="currentColor" />
              </Ic>
            </Btn>
            <Btn>
              <Ic c="#77797c">
                <path d="M3 2h4v12H3zM9 2h4v12H9z" fill="currentColor" />
              </Ic>
            </Btn>
            <Btn>
              <Ic c="#77797c">
                <rect x="2" y="2" width="12" height="12" rx="1" fill="currentColor" />
              </Ic>
            </Btn>
            <Btn>
              <Ic c="#77797c">
                <path fillRule="evenodd" d="M1 2h14v9H1zM6 3.500v6L11 6.500z" fill="currentColor" />
                <path d="M4 14h8" stroke="currentColor" strokeWidth="1.8" />
              </Ic>
            </Btn>
            <Btn>
              <Ic>
                <path fillRule="evenodd" d="M1 5.500h14v9H1zM6 7v6l5-3z" fill="currentColor" />
                <path d="M1.500 2.500 2 4M5 2l.5 2M8.500 2l.5 2M12 2l.5 2M15 2v2" stroke="currentColor" strokeWidth="1.5" />
              </Ic>
            </Btn>
            <Btn>
              <Ic>
                <path fillRule="evenodd" d="M1 5.500h14v9H1zM4 8v4h8V8z" fill="currentColor" />
                <path d="M1.500 2.500 2 4M5 2l.5 2M8.500 2l.5 2M12 2l.5 2M15 2v2" stroke="currentColor" strokeWidth="1.5" />
              </Ic>
            </Btn>
            <Btn>
              <Ic c="#cfd0d2">
                <circle cx="7.500" cy="7.500" r="6.500" fill="currentColor" />
                <circle cx="7.500" cy="4" r="1.400" fill="#2c2e33" />
                <circle cx="7.500" cy="11" r="1.400" fill="#2c2e33" />
                <circle cx="4" cy="7.500" r="1.400" fill="#2c2e33" />
                <circle cx="11" cy="7.500" r="1.400" fill="#2c2e33" />
                <path d="M12 12l3 3" stroke="currentColor" strokeWidth="1.5" />
              </Ic>
            </Btn>
          </div>
          <div className="flex items-center h-[40px] w-[139px] shrink-0 pl-[14px] font-semibold text-[19.5px] text-[#5d9a3c]">
            <span>Forward+</span>
            <div className="ml-[8px]">
              <Ic s={16} c="#5d9a3c">
                <path d="M2 5l6 6 6-6" stroke="currentColor" strokeWidth="2" />
              </Ic>
            </div>
          </div>
        </div>
        <div className="flex flex-1 min-h-0 pl-[4px]">
          <div className="flex flex-col w-[417px] shrink-0">
            <ScenePanel />
            <FilePanel />
          </div>
          <Center />
          <Inspector />
        </div>
      </div>
    </div>
  );
}
